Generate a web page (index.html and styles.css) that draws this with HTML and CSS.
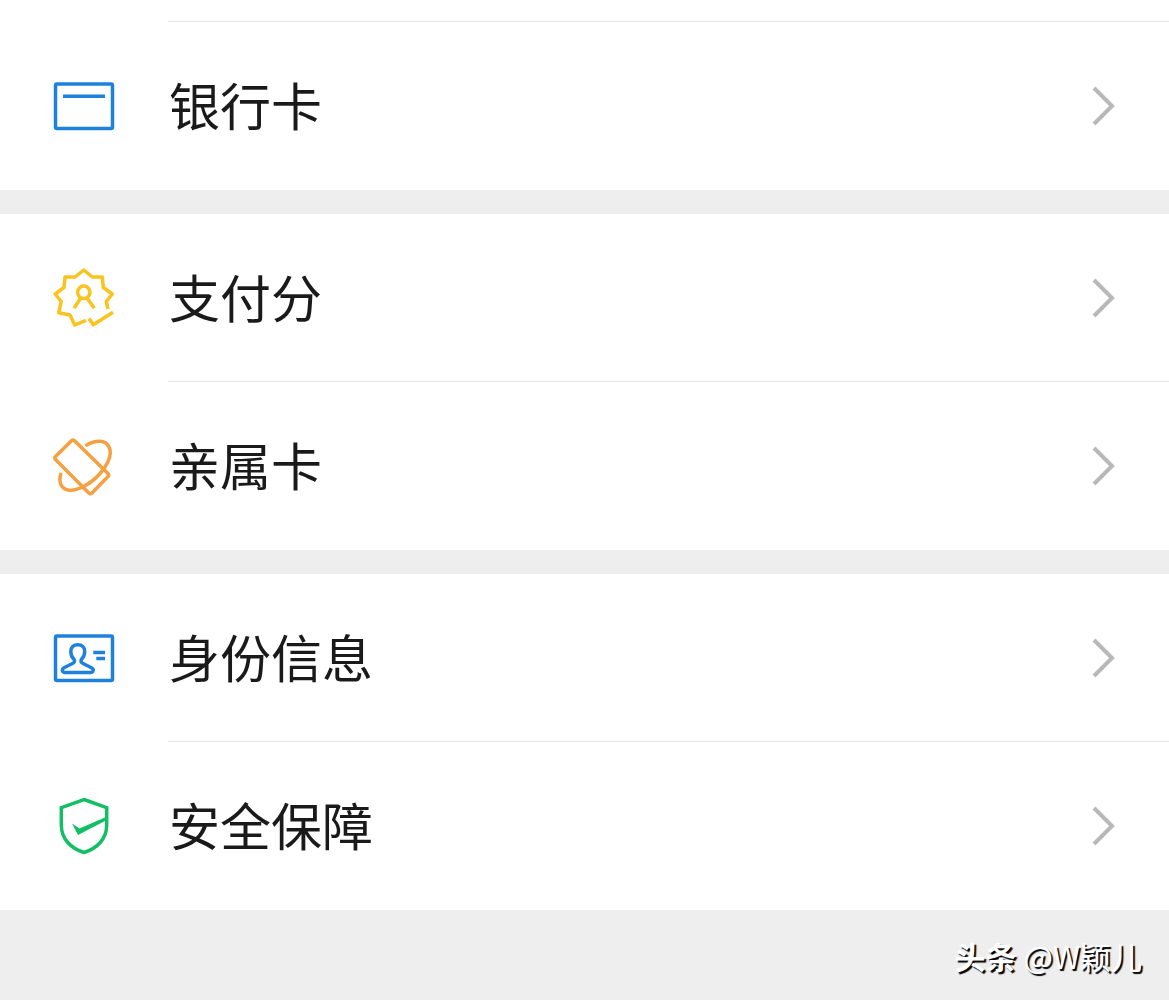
FILE: index.html
```html
<!DOCTYPE html>
<html lang="zh-CN">
<head>
    <meta charset="UTF-8">
    <meta name="viewport" content="width=device-width, initial-scale=1.0">
    <title>支付服务</title>
    <link rel="stylesheet" href="styles.css">
</head>
<body>
    <main>
        <!-- 银行卡 -->
        <nav class="group group-first">
            <a class="row" href="#bank">
                <svg class="icon blue" viewBox="0 0 64 64">
                    <rect x="3.5" y="10" width="57" height="44.5" rx="1.5"/>
                    <path d="M11 22.2H53"/>
                </svg>
                <span class="label">银行卡</span>
                <svg class="arrow" viewBox="0 0 24 40"><path d="M2 2L20 20L2 38"/></svg>
            </a>
        </nav>

        <!-- 支付分、亲属卡 -->
        <nav class="group">
            <a class="row" href="#score">
                <svg class="icon yellow" viewBox="0 0 64 64">
                    <path d="M56 43L54.3 35.5L60.3 28L51.3 21.5L50.3 11H40.3L31.8 4L23.2 11H13L12 21.5L3.2 28L9.2 35.5L6.8 46.7L18 49L22.7 59L34 54.3"/>
                    <path d="M37 52.5L41.3 58.8L61 46.3"/>
                    <circle cx="31.8" cy="26.3" r="6.2"/>
                    <path d="M28.8 32L22 42.3M35 32L42.3 42.3"/>
                </svg>
                <span class="label">支付分</span>
                <svg class="arrow" viewBox="0 0 24 40"><path d="M2 2L20 20L2 38"/></svg>
            </a>
            <a class="row" href="#family">
                <svg class="icon orange" viewBox="0 0 64 64">
                    <path d="M19.5 6.7Q21 5.2 22.5 6.7L56 39.5Q57.5 41 56 42.5L40 59Q38.3 60.5 36.8 59L3.5 25.5Q2 24 3.5 22.5Z"/>
                    <path d="M34.7 11C44 5.5 53 6 56.5 12C60.5 19 57 29 48 39.5C39 50 25 57.5 16.3 56C9 54.500 6.5 48 8.7 40.3"/>
                </svg>
                <span class="label">亲属卡</span>
                <svg class="arrow" viewBox="0 0 24 40"><path d="M2 2L20 20L2 38"/></svg>
            </a>
        </nav>

        <!-- 身份信息、安全保障 -->
        <nav class="group">
            <a class="row" href="#identity">
                <svg class="icon blue" viewBox="0 0 64 64">
                    <rect x="3.5" y="10" width="57" height="44.5" rx="1.5"/>
                    <path d="M25.8 18.7C21.5 18.7 18.8 21.5 18.8 25.5C18.8 29 20 31.500 22 33.300C23.200 35 22.500 36.500 20.500 37.500L12.500 41.500C10.500 42.500 10 44 10.500 45Q11 46.500 13 46.500H38.500Q40.500 46.500 41 45C41.500 44 41 42.500 39 41.500L31 37.500C29 36.500 28.300 35 29.500 33.300C31.500 31.500 32.700 29 32.700 25.500C32.700 21.500 30 18.700 25.800 18.700Z"/>
                    <path d="M41.3 26.5H53M44.3 32.5H53"/>
                </svg>
                <span class="label">身份信息</span>
                <svg class="arrow" viewBox="0 0 24 40"><path d="M2 2L20 20L2 38"/></svg>
            </a>
            <a class="row" href="#security">
                <svg class="icon green" viewBox="0 0 64 64">
                    <path d="M32 5.5L54.7 13.7V31C54.7 45 45 54.5 32 58.5C19 54.5 9.3 45 9.3 31V13.7Z"/>
                    <path class="solid" d="M20 29.5L27.5 34.5L54 23V26.5L26 41Z"/>
                </svg>
                <span class="label">安全保障</span>
                <svg class="arrow" viewBox="0 0 24 40"><path d="M2 2L20 20L2 38"/></svg>
            </a>
        </nav>
    </main>

    <footer class="mark"><b>头条</b> @W颖儿</footer>
</body>
</html>
```
FILE: styles.css
```css
* {
    margin: 0;
    padding: 0;
    box-sizing: border-box;
}

body {
    background: #eee;
    color: #1a1a1a;
    font-family: "Noto Sans CJK SC", sans-serif;
}

/* 列表分组 */
.group {
    margin-bottom: 24px;
    background: #fff;
}

.group-first {
    padding-top: 22px;
}

.group:last-child {
    margin-bottom: 0;
}

.row {
    position: relative;
    display: flex;
    align-items: center;
    height: 168px;
    padding: 0 53px 0 52px;
    color: inherit;
    text-decoration: none;
}

/* 分隔线，从文字处开始 */
.row + .row::before,
.group-first .row::before {
    content: "";
    position: absolute;
    top: -1px;
    left: 168px;
    right: 0;
    height: 1px;
    background: #e5e5e5;
}

.label {
    flex: 1;
    margin-left: 53px;
    padding-bottom: 4px;
    font-size: 51px;
    line-height: 72px;
}

/* 图标 */
.icon {
    width: 64px;
    height: 64px;
    fill: none;
    stroke: currentColor;
    stroke-width: 3.5;
    stroke-linejoin: round;
}

.blue { color: #1e82dc; }
.yellow { color: #fac31e; }
.orange { color: #f5a041; stroke-linecap: round; }
.green { color: #13be64; stroke-linejoin: miter; }

.solid {
    fill: currentColor;
    stroke: none;
}

.arrow {
    width: 24px;
    height: 40px;
    fill: none;
    stroke: #b8b8b8;
    stroke-width: 4;
}

/* 右下角署名 */
.mark {
    padding: 24px 27px 0 0;
    color: #fff;
    font-size: 31px;
    line-height: 44px;
    text-align: right;
    text-shadow: 2px 2px 1px #000;
}
```
